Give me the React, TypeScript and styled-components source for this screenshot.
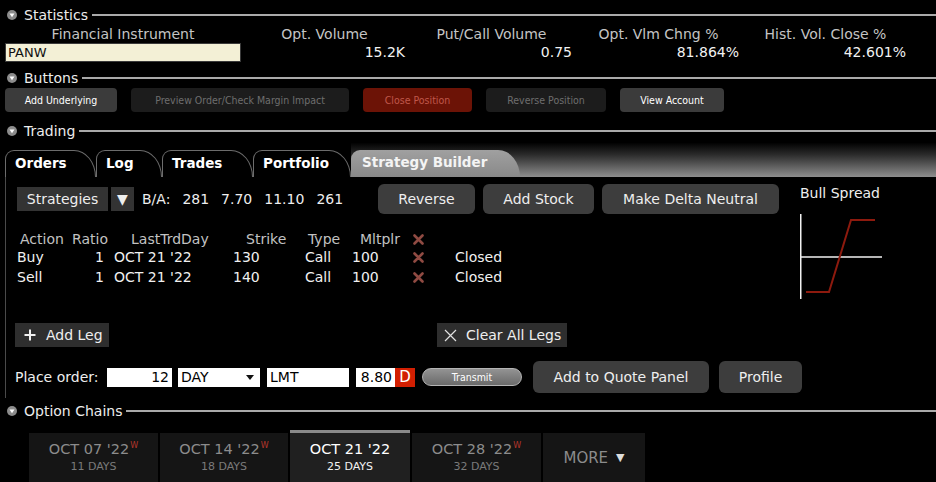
import React from 'react';
import styled, { createGlobalStyle } from 'styled-components';

const GlobalStyle = createGlobalStyle`
  * {
    margin: 0;
    padding: 0;
    box-sizing: border-box;
  }
  html, body {
    width: 100%;
    height: 100%;
    background-color: #000;
  }
  body {
    font-family: "DejaVu Sans", Verdana, sans-serif;
    color: #eee;
    overflow: hidden;
  }
`;

const Page = styled.div`
  width: 936px;
  height: 482px;
  background: #000;
  display: flex;
  flex-direction: column;
  overflow: hidden;
`;

// collapsible section header: icon, title and a rule to the right edge
const SectionHead = styled.div<{ $top: number }>`
  display: flex;
  align-items: center;
  height: 20px;
  margin-top: ${p => p.$top}px;
  padding-left: 7px;
`;

const SectionTitle = styled.span`
  font-size: 14px;
  color: #ececec;
  margin-left: 7px;
  line-height: 20px;
  white-space: nowrap;
`;

const SectionRule = styled.div`
  flex: 1;
  height: 2px;
  background: #a9a9a9;
  margin-left: 4px;
`;

const Toggle = () => (
  <svg width="10" height="10" viewBox="0 0 10 10">
    <circle cx="5" cy="5" r="5" fill="#8c8c8c" />
    <polygon points="2.5,3.4 7.5,3.4 5,7.2" fill="#fff" />
  </svg>
);

const Section = ({ title, top }: { title: string; top: number }) => (
  <SectionHead $top={top}>
    <Toggle />
    <SectionTitle>{title}</SectionTitle>
    <SectionRule />
  </SectionHead>
);

/* statistics */
const StatsGrid = styled.div`
  display: grid;
  grid-template-columns: 236px repeat(4, 167px);
  padding-left: 5px;
`;

const StatHead = styled.div`
  height: 17px;
  line-height: 18px;
  font-size: 14px;
  color: #c4c4c4;
  text-align: center;
  white-space: nowrap;
`;

const StatValue = styled.div`
  margin-top: 1px;
  height: 19px;
  line-height: 19px;
  font-size: 14px;
  color: #f2f2f2;
  text-align: right;
  padding-right: 3px;
`;

const SymbolBox = styled.div`
  margin-top: 1px;
  height: 19px;
  line-height: 17px;
  background: #f3f0d6;
  color: #111;
  font-size: 13px;
  padding-left: 2px;
  border: 1px solid #3a3a3a;
`;

/* button bar */
const ButtonBar = styled.div`
  display: flex;
  gap: 14px;
  padding-left: 5px;
  height: 24px;
`;

type BarKind = 'on' | 'off' | 'danger';

const barColors: Record<BarKind, [string, string]> = {
  on: ['#3b3b3b', '#ffffff'],
  off: ['#1c1c1c', '#6e6e6e'],
  danger: ['#6c1306', '#c0584b'],
};

const BarButton = styled.div<{ $w: number; $kind: BarKind }>`
  width: ${p => p.$w}px;
  height: 24px;
  border-radius: 4px;
  display: flex;
  align-items: center;
  justify-content: center;
  font-family: "DejaVu Sans Condensed", "DejaVu Sans", sans-serif;
  font-stretch: condensed;
  font-size: 10.5px;
  background: ${p => barColors[p.$kind][0]};
  color: ${p => barColors[p.$kind][1]};
  white-space: nowrap;
`;

/* trading tabs */
const TabStrip = styled.div`
  margin-top: 2px;
  height: 34px;
  display: flex;
  align-items: flex-end;
  background: linear-gradient(#020202, #2c2c2c 35%, #8e8e8e);
`;

const TabGroup = styled.div`
  display: flex;
  align-items: flex-end;
  height: 100%;
  padding-left: 5px;
  background: #000;
`;

const Tab = styled.div<{ $w: number; $active?: boolean }>`
  width: ${p => p.$w}px;
  height: 27px;
  padding-left: 9px;
  font-weight: bold;
  font-size: 13.5px;
  line-height: 25px;
  white-space: nowrap;
  border-radius: 9px 22px 0 0 / 9px 27px 0 0;
  ${p =>
    p.$active
      ? `background: linear-gradient(#a0a0a0, #898989); color: #f4f4f4; padding-left: 11px;`
      : `background: #000; color: #fff; border: 1px solid #6c6c6c; border-bottom: none;`}
`;

/* trading panel */
const Panel = styled.div`
  margin-left: 5px;
  border-left: 1px solid #4a4a4a;
  padding: 0 0 5px 9px;
`;

const TopArea = styled.div`
  display: grid;
  grid-template-columns: 785px 1fr;
  height: 122px;
`;

const LeftCol = styled.div`
  padding-top: 7px;
`;

const StrategyRow = styled.div`
  display: flex;
  align-items: center;
  height: 30px;
`;

const GreyBox = styled.div<{ $w: number; $gap: number }>`
  width: ${p => p.$w}px;
  height: 24px;
  margin-left: ${p => p.$gap}px;
  background: #333;
  color: #eee;
  font-size: 14px;
  display: flex;
  align-items: center;
  justify-content: center;
`;

const Quote = styled.div`
  width: 236px;
  margin-left: 8px;
  display: flex;
  gap: 12px;
  font-size: 14px;
  color: #eee;
`;

const ActionGroup = styled.div`
  display: flex;
  gap: 8px;
`;

const RoundButton = styled.div<{ $w: number; $h: number }>`
  width: ${p => p.$w}px;
  height: ${p => p.$h}px;
  border-radius: 6px;
  background: #3d3d3d;
  color: #eee;
  font-size: 14px;
  display: flex;
  align-items: center;
  justify-content: center;
  white-space: nowrap;
`;

const LegTable = styled.div`
  margin-top: 17px;
  margin-left: 2px;
  display: grid;
  grid-template-columns: 51px 40px 112px 75px 55px 55px 35px 80px;
`;

const Cell = styled.div<{ $pl?: number; $pr?: number; $right?: boolean; $head?: boolean }>`
  height: ${p => (p.$head ? 16 : 20)}px;
  line-height: ${p => (p.$head ? 16 : 20)}px;
  font-size: 14px;
  color: ${p => (p.$head ? '#c2c2c2' : '#f0f0f0')};
  padding-left: ${p => p.$pl ?? 0}px;
  padding-right: ${p => p.$pr ?? 0}px;
  white-space: nowrap;
  display: flex;
  align-items: center;
  justify-content: ${p => (p.$right ? 'flex-end' : 'flex-start')};
`;

const RemoveMark = () => (
  <svg width="11" height="11" viewBox="0 0 11 11">
    <path d="M1.5 1.5 L9.5 9.5 M9.5 1.5 L1.5 9.5" stroke="#8f4a42" strokeWidth="2.6" strokeLinecap="round" />
  </svg>
);

const RightCol = styled.div`
  display: flex;
  flex-direction: column;
`;

const ChartTitle = styled.div`
  margin-top: 8px;
  height: 16px;
  line-height: 16px;
  font-size: 14px;
  color: #eee;
`;

const ChartBox = styled.svg`
  margin-top: 13px;
  display: block;
`;

const LegActions = styled.div`
  display: grid;
  grid-template-columns: 422px auto;
  margin-top: 24px;
  height: 24px;
`;

const LegButton = styled.div<{ $pl: number; $gap: number }>`
  justify-self: start;
  display: inline-flex;
  align-items: center;
  height: 24px;
  padding: 0 6px 0 ${p => p.$pl}px;
  gap: ${p => p.$gap}px;
  background: #2e2e2e;
  color: #eee;
  font-size: 14px;
  white-space: nowrap;
`;

const OrderRow = styled.div`
  display: flex;
  align-items: center;
  margin-top: 14px;
  height: 32px;
`;

const OrderLabel = styled.div`
  width: 92px;
  font-size: 14px;
  color: #eee;
  white-space: nowrap;
`;

const Field = styled.div<{ $w: number; $right?: boolean; $gap?: number }>`
  width: ${p => p.$w}px;
  height: 19px;
  margin-left: ${p => p.$gap ?? 7}px;
  background: #fff;
  color: #000;
  font-size: 14px;
  padding: 0 3px;
  display: flex;
  align-items: center;
  justify-content: ${p => (p.$right ? 'flex-end' : 'space-between')};
`;

const SelectArrow = styled.span`
  width: 0;
  height: 0;
  border-left: 4px solid transparent;
  border-right: 4px solid transparent;
  border-top: 5px solid #111;
  margin-right: 3px;
`;

const DFlag = styled.div`
  width: 20px;
  height: 19px;
  background: #d21f02;
  color: #fff;
  font-size: 15px;
  display: flex;
  align-items: center;
  justify-content: center;
`;

const TransmitPill = styled.div`
  width: 100px;
  height: 18px;
  margin-left: 7px;
  border-radius: 9px;
  border: 1px solid #b4b4b4;
  background: linear-gradient(#939393, #6a6a6a);
  color: #fff;
  font-family: "DejaVu Sans Condensed", "DejaVu Sans", sans-serif;
  font-stretch: condensed;
  font-size: 10.5px;
  display: flex;
  align-items: center;
  justify-content: center;
`;

const OrderButtons = styled.div`
  display: flex;
  gap: 10px;
  margin-left: 11px;
`;

/* option chain expiries */
const ExpiryBar = styled.div`
  margin-top: 9px;
  height: 52px;
  display: flex;
  align-items: flex-end;
  gap: 2px;
  padding-left: 29px;
`;

const ExpiryTab = styled.div<{ $w: number; $active?: boolean }>`
  width: ${p => p.$w}px;
  height: ${p => (p.$active ? 52 : 49)}px;
  border-top: ${p => (p.$active ? '3px solid #8a8a8a' : 'none')};
  background: ${p => (p.$active ? '#202020' : '#151515')};
  padding-top: 8px;
  display: flex;
  flex-direction: column;
  align-items: center;
`;

const ExpiryDate = styled.div<{ $active?: boolean }>`
  height: 17px;
  line-height: 17px;
  font-size: 14.5px;
  color: ${p => (p.$active ? '#fff' : '#8c8c8c')};
  white-space: nowrap;
`;

const WeeklyMark = styled.span`
  display: inline-block;
  margin-left: 1px;
  font-size: 8px;
  line-height: 0;
  vertical-align: 6px;
  color: #b5362b;
`;

const ExpiryDays = styled.div<{ $active?: boolean }>`
  margin-top: 2px;
  height: 13px;
  line-height: 13px;
  font-size: 11px;
  color: ${p => (p.$active ? '#f2f2f2' : '#7a7a7a')};
  white-space: nowrap;
`;

const MoreTab = styled.div`
  width: 102px;
  height: 49px;
  background: #151515;
  display: flex;
  align-items: center;
  justify-content: center;
  gap: 8px;
  font-size: 15px;
  color: #8c8c8c;
`;

const MoreArrow = styled.span`
  font-size: 11px;
  color: #ddd;
`;

const stats = [
  { head: 'Opt. Volume', value: '15.2K' },
  { head: 'Put/Call Volume', value: '0.75' },
  { head: 'Opt. Vlm Chng %', value: '81.864%' },
  { head: 'Hist. Vol. Close %', value: '42.601%' },
];

const barButtons: { label: string; w: number; kind: BarKind }[] = [
  { label: 'Add Underlying', w: 112, kind: 'on' },
  { label: 'Preview Order/Check Margin Impact', w: 218, kind: 'off' },
  { label: 'Close Position', w: 109, kind: 'danger' },
  { label: 'Reverse Position', w: 120, kind: 'off' },
  { label: 'View Account', w: 104, kind: 'on' },
];

const legs = [
  { action: 'Buy', strike: '130' },
  { action: 'Sell', strike: '140' },
];

const expiries = [
  { date: "OCT 07 '22", days: '11 DAYS', weekly: true, w: 129 },
  { date: "OCT 14 '22", days: '18 DAYS', weekly: true, w: 128 },
  { date: "OCT 21 '22", days: '25 DAYS', weekly: false, w: 120, active: true },
  { date: "OCT 28 '22", days: '32 DAYS', weekly: true, w: 129 },
];

function App() {
  return (
    <>
      <GlobalStyle />
      <Page>
        <Section title="Statistics" top={5} />
        <StatsGrid>
          <StatHead>Financial Instrument</StatHead>
          {stats.map(s => (
            <StatHead key={s.head}>{s.head}</StatHead>
          ))}
          <SymbolBox>PANW</SymbolBox>
          {stats.map(s => (
            <StatValue key={s.head}>{s.value}</StatValue>
          ))}
        </StatsGrid>

        <Section title="Buttons" top={6} />
        <ButtonBar>
          {barButtons.map(b => (
            <BarButton key={b.label} $w={b.w} $kind={b.kind}>
              {b.label}
            </BarButton>
          ))}
        </ButtonBar>

        <Section title="Trading" top={9} />
        <TabStrip>
          <TabGroup>
            <Tab $w={91}>Orders</Tab>
            <Tab $w={66}>Log</Tab>
            <Tab $w={91}>Trades</Tab>
            <Tab $w={98}>Portfolio</Tab>
          </TabGroup>
          <Tab $w={169} $active>
            Strategy Builder
          </Tab>
        </TabStrip>

        <Panel>
          <TopArea>
            <LeftCol>
              <StrategyRow>
                <GreyBox $w={91} $gap={2}>Strategies</GreyBox>
                <GreyBox $w={23} $gap={3}>▼</GreyBox>
                <Quote>
                  <span>B/A:</span>
                  <span>281</span>
                  <span>7.70</span>
                  <span>11.10</span>
                  <span>261</span>
                </Quote>
                <ActionGroup>
                  <RoundButton $w={97} $h={30}>Reverse</RoundButton>
                  <RoundButton $w={111} $h={30}>Add Stock</RoundButton>
                  <RoundButton $w={177} $h={30}>Make Delta Neutral</RoundButton>
                </ActionGroup>
              </StrategyRow>

              <LegTable>
                <Cell $head $pl={3}>Action</Cell>
                <Cell $head $right>Ratio</Cell>
                <Cell $head $pl={23}>LastTrdDay</Cell>
                <Cell $head $pl={26}>Strike</Cell>
                <Cell $head $pl={13}>Type</Cell>
                <Cell $head $pl={10}>Mltplr</Cell>
                <Cell $head $pl={8}><RemoveMark /></Cell>
                <Cell $head />
                {legs.map(l => (
                  <React.Fragment key={l.action}>
                    <Cell>{l.action}</Cell>
                    <Cell $right $pr={4}>1</Cell>
                    <Cell $pl={6}>OCT 21 '22</Cell>
                    <Cell $pl={13}>{l.strike}</Cell>
                    <Cell $pl={10}>Call</Cell>
                    <Cell $pl={2}>100</Cell>
                    <Cell $pl={8}><RemoveMark /></Cell>
                    <Cell $pl={15}>Closed</Cell>
                  </React.Fragment>
                ))}
              </LegTable>
            </LeftCol>

            <RightCol>
              <ChartTitle>Bull Spread</ChartTitle>
              <ChartBox width="90" height="86" viewBox="0 0 90 86">
                <line x1="0.75" y1="0" x2="0.75" y2="85" stroke="#f2f2f2" strokeWidth="1.5" />
                <line x1="0" y1="43" x2="82" y2="43" stroke="#f2f2f2" strokeWidth="1.5" />
                <polyline points="6,78 29,78 51,6 75,6" fill="none" stroke="#8d1a0e" strokeWidth="2" />
              </ChartBox>
            </RightCol>
          </TopArea>

          <LegActions>
            <LegButton $pl={9} $gap={10}>
              <svg width="12" height="12" viewBox="0 0 12 12">
                <path d="M6 0.5 V11.5 M0.5 6 H11.5" stroke="#f0f0f0" strokeWidth="2" />
              </svg>
              Add Leg
            </LegButton>
            <LegButton $pl={7} $gap={9}>
              <svg width="13" height="13" viewBox="0 0 13 13">
                <path d="M1 1 L12 12 M12 1 L1 12" stroke="#e0e0e0" strokeWidth="1.2" />
              </svg>
              Clear All Legs
            </LegButton>
          </LegActions>

          <OrderRow>
            <OrderLabel>Place order:</OrderLabel>
            <Field $w={65} $right $gap={0}>12</Field>
            <Field $w={82} $gap={6}>
              DAY
              <SelectArrow />
            </Field>
            <Field $w={82}>LMT</Field>
            <Field $w={39} $right>8.80</Field>
            <DFlag>D</DFlag>
            <TransmitPill>Transmit</TransmitPill>
            <OrderButtons>
              <RoundButton $w={176} $h={32}>Add to Quote Panel</RoundButton>
              <RoundButton $w={83} $h={32}>Profile</RoundButton>
            </OrderButtons>
          </OrderRow>
        </Panel>

        <Section title="Option Chains" top={3} />
        <ExpiryBar>
          {expiries.map(e => (
            <ExpiryTab key={e.date} $w={e.w} $active={e.active}>
              <ExpiryDate $active={e.active}>
                {e.date}
                {e.weekly && <WeeklyMark>W</WeeklyMark>}
              </ExpiryDate>
              <ExpiryDays $active={e.active}>{e.days}</ExpiryDays>
            </ExpiryTab>
          ))}
          <MoreTab>
            MORE <MoreArrow>▼</MoreArrow>
          </MoreTab>
        </ExpiryBar>
      </Page>
    </>
  );
}

export default App;
